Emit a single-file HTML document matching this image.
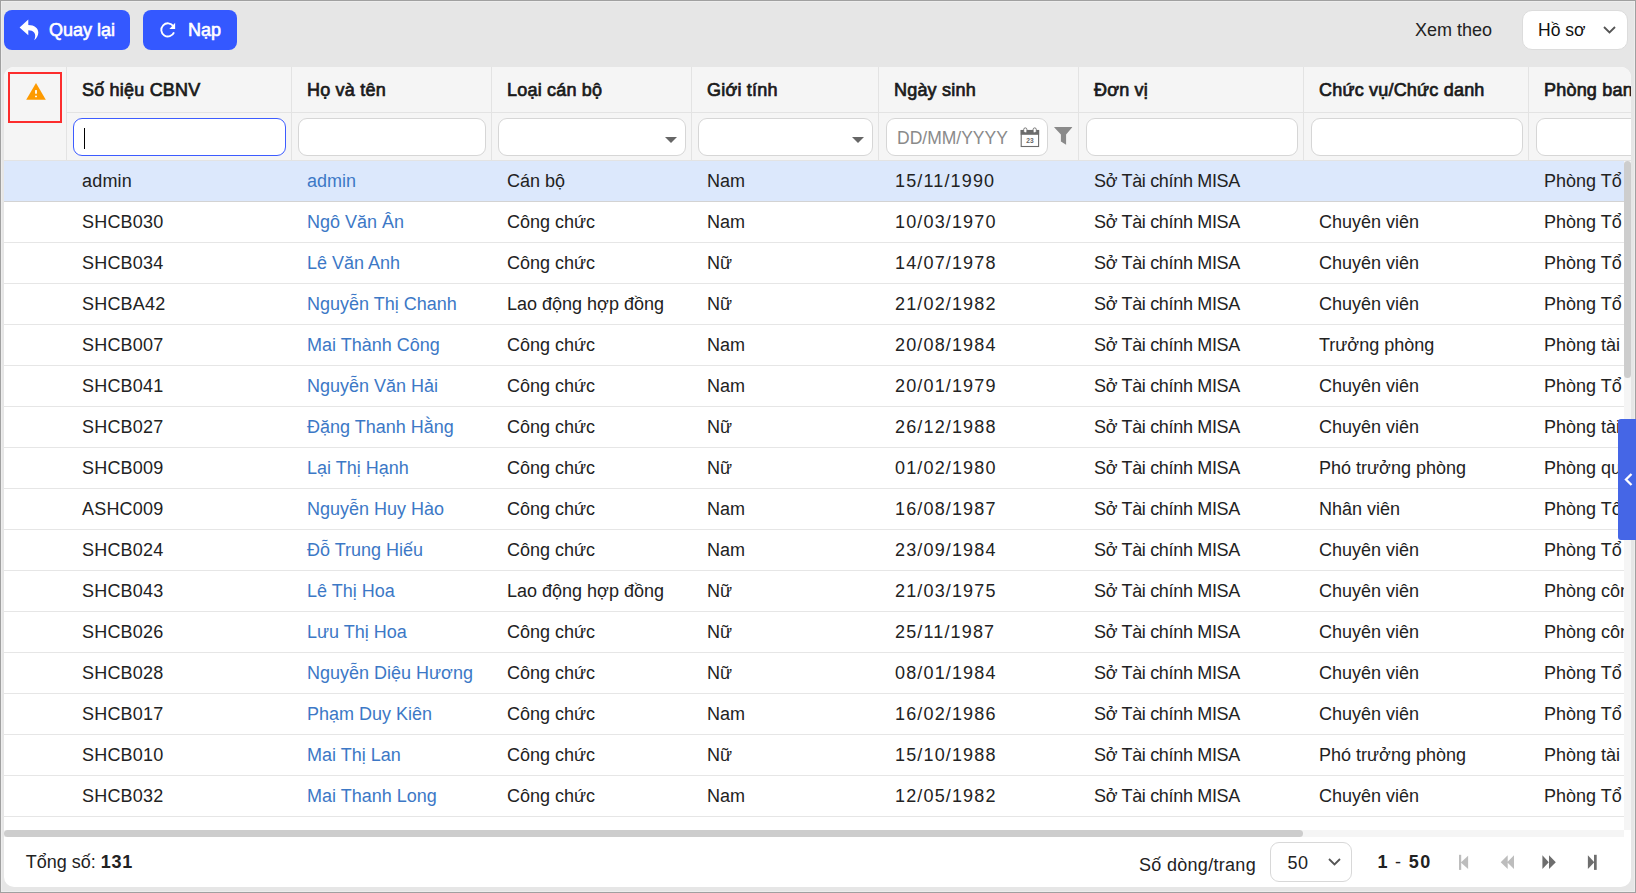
<!DOCTYPE html><html><head><meta charset="utf-8"><style>*{box-sizing:border-box;margin:0;padding:0}
html,body{width:1636px;height:893px;overflow:hidden;background:#e6e6e6;font-family:"Liberation Sans",sans-serif;color:#1f1f1f}
#frame{position:absolute;left:0;top:0;width:1636px;height:893px;background:#e6e6e6}
.fb{position:absolute;background:#a0a0a0}
.fl{position:absolute;border:1px solid #ededed}
.btn{position:absolute;top:10px;height:40px;border-radius:8px;background:#3458ff;color:#fff;font-size:18px}
.btn span{position:absolute;top:10px;line-height:20px;-webkit-text-stroke:0.6px #fff}
.btn .ic{position:absolute}
#xemtheo{position:absolute;left:1415px;top:20px;font-size:18px;line-height:20px;color:#222}
#sel{position:absolute;left:1522px;top:10px;width:105.5px;height:39.5px;border-radius:10px;background:#fff;border:1px solid #dcdcdc}
#sel span{position:absolute;left:15px;top:9px;font-size:17.5px;line-height:20px;color:#111}
#tbl{position:absolute;left:4px;top:67px;width:1627px;height:820px;background:#fff;border-radius:10px;overflow:hidden}
#hdr{position:absolute;left:0;top:0;width:100%;height:46px;background:#f5f5f5}
.hl{position:absolute;height:1px;background:#e3e3e3}
#flt{position:absolute;left:0;top:46px;width:100%;height:48px;background:#f5f5f5;border-bottom:1px solid #e3e3e3}
.vline{position:absolute;top:0;width:1px;height:94px;background:#e3e3e3}
.hcell{position:absolute;top:13px;font-size:18px;font-weight:400;line-height:20px;white-space:nowrap;color:#1a1a1a;-webkit-text-stroke:0.7px #1a1a1a;letter-spacing:0.2px}
#warn{position:absolute;left:4px;top:5px;width:54px;height:51px;border:2px solid #fc2d2d}
.inp{position:absolute;top:51px;height:38px;background:#fff;border:1px solid #d6d6d6;border-radius:9px}
.inp.focus{border:1.5px solid #3d5cff}
.caret{position:absolute;left:9.5px;top:8.5px;width:1px;height:21px;background:#000}
.tri{position:absolute;right:8px;top:18px;width:0;height:0;border-left:6.5px solid transparent;border-right:6.5px solid transparent;border-top:6.5px solid #666}
.ph{position:absolute;left:10px;top:9px;font-size:17.5px;line-height:20px;color:#8a8a8a}
#body{position:absolute;left:0;top:94px;width:1620px;height:668px;overflow:hidden}
.row{position:absolute;left:0;width:1800px;height:41px;border-bottom:1px solid #e6e6e6;background:#fff}
.row.sel{background:#dce8fc;border-bottom-color:#d3d3d3}
.cell{position:absolute;top:10px;font-size:18px;line-height:20px;white-space:nowrap;color:#222}
.cell.link{color:#3c78c6;letter-spacing:0px}
.cell.id{letter-spacing:0.2px}
.cell.date{letter-spacing:1.15px}
.cell.dv{letter-spacing:-0.33px}
#vtrack{position:absolute;left:1620px;top:94px;width:7px;height:669px;background:#f5f5f5}
#vthumb{position:absolute;left:0;top:0;width:7px;height:217px;border-radius:3.5px;background:#cdcdcd}
#htrack{position:absolute;left:0;top:763px;width:1620px;height:7px;background:#f5f5f5}
#hthumb{position:absolute;left:0;top:0;width:1299px;height:7px;border-radius:3.5px;background:#cdcdcd}
#total{position:absolute;left:21.8px;top:785px;font-size:18px;line-height:20px;color:#222}
#total b{letter-spacing:0.7px}
#rpp{position:absolute;left:1135px;top:788px;letter-spacing:0.3px;font-size:18px;line-height:20px;color:#222}
#sel50{position:absolute;left:1266px;top:775px;width:82px;height:40px;border-radius:9px;border:1px solid #d8d8d8;background:#fff}
#sel50 span{position:absolute;left:16.5px;top:9.5px;letter-spacing:0.6px;font-size:18px;line-height:20px;color:#222}
.rg{position:absolute;top:785px;font-size:18px;font-weight:700;line-height:20px;color:#222;letter-spacing:0.8px}
#tab{position:absolute;left:1618px;top:419px;width:18px;height:121px;background:#4566e6;border-radius:3px 0 0 3px}
</style></head><body>
<div id="frame"><div class="fl" style="left:1px;top:1px;width:1634px;height:891px"></div><div class="fb" style="left:0;top:0;width:1636px;height:1px"></div><div class="fb" style="left:0;top:0;width:1px;height:893px"></div><div class="fb" style="left:1635px;top:0;width:1px;height:893px"></div><div class="fb" style="left:0;top:892px;width:1636px;height:1px"></div>
<div class="btn" style="left:4px;width:126px"><svg class="ic" style="left:0;top:0" width="40" height="40" viewBox="0 0 40 40"><path d="M15.6 17.6 L24.3 9.6 L24.3 15 C30.6 15 34.3 18.3 34.3 22.6 C34.3 25.6 32.6 28.6 30.2 30.2 C31.6 27.2 31.6 24.6 30.1 22.6 C28.8 21 27 20.3 24.3 20.3 L24.3 25.3 Z" fill="#fff"/></svg><span style="left:45px">Quay lại</span></div>
<div class="btn" style="left:143px;width:94px"><svg class="ic" style="left:0;top:0" width="40" height="40" viewBox="0 0 40 40"><path d="M30.31 16.11 A6.6 6.6 0 1 0 31.02 22.37" fill="none" stroke="#fff" stroke-width="1.85"/><path d="M32.15 12.8 L32.15 18.9 L26.4 18.9 Z" fill="#fff"/></svg><span style="left:45px">Nạp</span></div>
<div id="xemtheo">Xem theo</div>
<div id="sel"><span>Hồ sơ</span><svg style="position:absolute;left:80px;top:15px" width="13" height="8" viewBox="0 0 13 8"><path d="M1 1 L6.5 6.5 L12 1" fill="none" stroke="#555" stroke-width="1.8"/></svg></div>
<div id="tbl">
<div id="hdr"></div><div id="flt"></div><div class="hl" style="left:62px;top:45px;width:1700px"></div>
<div class="vline" style="left:62px"></div>
<div class="hcell" style="left:78px">Số hiệu CBNV</div>
<div class="vline" style="left:287px"></div>
<div class="hcell" style="left:303px">Họ và tên</div>
<div class="vline" style="left:487px"></div>
<div class="hcell" style="left:503px">Loại cán bộ</div>
<div class="vline" style="left:687px"></div>
<div class="hcell" style="left:703px">Giới tính</div>
<div class="vline" style="left:874px"></div>
<div class="hcell" style="left:890px">Ngày sinh</div>
<div class="vline" style="left:1074px"></div>
<div class="hcell" style="left:1090px">Đơn vị</div>
<div class="vline" style="left:1299px"></div>
<div class="hcell" style="left:1315px">Chức vụ/Chức danh</div>
<div class="vline" style="left:1524px"></div>
<div class="hcell" style="left:1540px">Phòng ban</div>
<div id="warn"></div><svg width="20" height="18" viewBox="0 0 20 18" style="position:absolute;left:22px;top:16px"><path d="M10 0 L19.8 16.8 L0.2 16.8 Z" fill="#fd9a00"/><rect x="9.1" y="7.1" width="1.8" height="3.6" fill="#fff"/><rect x="9.1" y="12.7" width="1.8" height="1.5" fill="#fff"/></svg>
<div class="inp focus" style="left:69px;width:213px"><div class="caret"></div></div>
<div class="inp" style="left:294px;width:188px"></div>
<div class="inp" style="left:494px;width:188px"><div class="tri"></div></div>
<div class="inp" style="left:694px;width:175px"><div class="tri"></div></div>
<div class="inp" style="left:882px;width:162px"><span class="ph">DD/MM/YYYY</span></div>
<svg style="position:absolute;left:1006px;top:53px" width="70" height="35" viewBox="0 0 70 35"><rect x="11.2" y="10.5" width="17.4" height="16" fill="#fff" stroke="#6b6b6b" stroke-width="1.1"/><rect x="10.7" y="10" width="18.4" height="4.8" fill="#6b6b6b"/><rect x="13.7" y="7.9" width="3.2" height="4.9" rx="1.6" fill="#fff" stroke="#6b6b6b" stroke-width="0.9"/><rect x="23.1" y="7.9" width="3.2" height="4.9" rx="1.6" fill="#fff" stroke="#6b6b6b" stroke-width="0.9"/><text x="19.9" y="23" font-size="6.6" font-weight="700" font-family="Liberation Sans" fill="#666" text-anchor="middle">23</text></svg>
<svg style="position:absolute;left:1006px;top:53px" width="70" height="35" viewBox="0 0 70 35"><path d="M44.1 7.3 Q44 7 44.5 7 L61.9 7 Q62.4 7 62.3 7.3 L56.1 14.5 L56.1 24.8 L50.9 21.4 L50.9 14.5 Z" fill="#8a8a8a"/></svg>
<div class="inp" style="left:1082px;width:212px"></div>
<div class="inp" style="left:1307px;width:212px"></div>
<div class="inp" style="left:1532px;width:212px"></div>
<div id="body">
<div class="row sel" style="top:0px">
<div class="cell id" style="left:78px">admin</div>
<div class="cell link" style="left:303px">admin</div>
<div class="cell" style="left:503px">Cán bộ</div>
<div class="cell" style="left:703px">Nam</div>
<div class="cell date" style="left:891px">15/11/1990</div>
<div class="cell dv" style="left:1090px">Sở Tài chính MISA</div>
<div class="cell" style="left:1315px"></div>
<div class="cell" style="left:1540px">Phòng Tổ chức</div>
</div>
<div class="row" style="top:41px">
<div class="cell id" style="left:78px">SHCB030</div>
<div class="cell link" style="left:303px">Ngô Văn Ân</div>
<div class="cell" style="left:503px">Công chức</div>
<div class="cell" style="left:703px">Nam</div>
<div class="cell date" style="left:891px">10/03/1970</div>
<div class="cell dv" style="left:1090px">Sở Tài chính MISA</div>
<div class="cell" style="left:1315px">Chuyên viên</div>
<div class="cell" style="left:1540px">Phòng Tổ chức</div>
</div>
<div class="row" style="top:82px">
<div class="cell id" style="left:78px">SHCB034</div>
<div class="cell link" style="left:303px">Lê Văn Anh</div>
<div class="cell" style="left:503px">Công chức</div>
<div class="cell" style="left:703px">Nữ</div>
<div class="cell date" style="left:891px">14/07/1978</div>
<div class="cell dv" style="left:1090px">Sở Tài chính MISA</div>
<div class="cell" style="left:1315px">Chuyên viên</div>
<div class="cell" style="left:1540px">Phòng Tổ chức</div>
</div>
<div class="row" style="top:123px">
<div class="cell id" style="left:78px">SHCBA42</div>
<div class="cell link" style="left:303px">Nguyễn Thị Chanh</div>
<div class="cell" style="left:503px">Lao động hợp đồng</div>
<div class="cell" style="left:703px">Nữ</div>
<div class="cell date" style="left:891px">21/02/1982</div>
<div class="cell dv" style="left:1090px">Sở Tài chính MISA</div>
<div class="cell" style="left:1315px">Chuyên viên</div>
<div class="cell" style="left:1540px">Phòng Tổ chức</div>
</div>
<div class="row" style="top:164px">
<div class="cell id" style="left:78px">SHCB007</div>
<div class="cell link" style="left:303px">Mai Thành Công</div>
<div class="cell" style="left:503px">Công chức</div>
<div class="cell" style="left:703px">Nam</div>
<div class="cell date" style="left:891px">20/08/1984</div>
<div class="cell dv" style="left:1090px">Sở Tài chính MISA</div>
<div class="cell" style="left:1315px">Trưởng phòng</div>
<div class="cell" style="left:1540px">Phòng tài chính</div>
</div>
<div class="row" style="top:205px">
<div class="cell id" style="left:78px">SHCB041</div>
<div class="cell link" style="left:303px">Nguyễn Văn Hải</div>
<div class="cell" style="left:503px">Công chức</div>
<div class="cell" style="left:703px">Nam</div>
<div class="cell date" style="left:891px">20/01/1979</div>
<div class="cell dv" style="left:1090px">Sở Tài chính MISA</div>
<div class="cell" style="left:1315px">Chuyên viên</div>
<div class="cell" style="left:1540px">Phòng Tổ chức</div>
</div>
<div class="row" style="top:246px">
<div class="cell id" style="left:78px">SHCB027</div>
<div class="cell link" style="left:303px">Đặng Thanh Hằng</div>
<div class="cell" style="left:503px">Công chức</div>
<div class="cell" style="left:703px">Nữ</div>
<div class="cell date" style="left:891px">26/12/1988</div>
<div class="cell dv" style="left:1090px">Sở Tài chính MISA</div>
<div class="cell" style="left:1315px">Chuyên viên</div>
<div class="cell" style="left:1540px">Phòng tài chính</div>
</div>
<div class="row" style="top:287px">
<div class="cell id" style="left:78px">SHCB009</div>
<div class="cell link" style="left:303px">Lại Thị Hạnh</div>
<div class="cell" style="left:503px">Công chức</div>
<div class="cell" style="left:703px">Nữ</div>
<div class="cell date" style="left:891px">01/02/1980</div>
<div class="cell dv" style="left:1090px">Sở Tài chính MISA</div>
<div class="cell" style="left:1315px">Phó trưởng phòng</div>
<div class="cell" style="left:1540px">Phòng quản lý</div>
</div>
<div class="row" style="top:328px">
<div class="cell id" style="left:78px">ASHC009</div>
<div class="cell link" style="left:303px">Nguyễn Huy Hào</div>
<div class="cell" style="left:503px">Công chức</div>
<div class="cell" style="left:703px">Nam</div>
<div class="cell date" style="left:891px">16/08/1987</div>
<div class="cell dv" style="left:1090px">Sở Tài chính MISA</div>
<div class="cell" style="left:1315px">Nhân viên</div>
<div class="cell" style="left:1540px">Phòng Tổ chức</div>
</div>
<div class="row" style="top:369px">
<div class="cell id" style="left:78px">SHCB024</div>
<div class="cell link" style="left:303px">Đỗ Trung Hiếu</div>
<div class="cell" style="left:503px">Công chức</div>
<div class="cell" style="left:703px">Nam</div>
<div class="cell date" style="left:891px">23/09/1984</div>
<div class="cell dv" style="left:1090px">Sở Tài chính MISA</div>
<div class="cell" style="left:1315px">Chuyên viên</div>
<div class="cell" style="left:1540px">Phòng Tổ chức</div>
</div>
<div class="row" style="top:410px">
<div class="cell id" style="left:78px">SHCB043</div>
<div class="cell link" style="left:303px">Lê Thị Hoa</div>
<div class="cell" style="left:503px">Lao động hợp đồng</div>
<div class="cell" style="left:703px">Nữ</div>
<div class="cell date" style="left:891px">21/03/1975</div>
<div class="cell dv" style="left:1090px">Sở Tài chính MISA</div>
<div class="cell" style="left:1315px">Chuyên viên</div>
<div class="cell" style="left:1540px">Phòng công nghệ</div>
</div>
<div class="row" style="top:451px">
<div class="cell id" style="left:78px">SHCB026</div>
<div class="cell link" style="left:303px">Lưu Thị Hoa</div>
<div class="cell" style="left:503px">Công chức</div>
<div class="cell" style="left:703px">Nữ</div>
<div class="cell date" style="left:891px">25/11/1987</div>
<div class="cell dv" style="left:1090px">Sở Tài chính MISA</div>
<div class="cell" style="left:1315px">Chuyên viên</div>
<div class="cell" style="left:1540px">Phòng công nghệ</div>
</div>
<div class="row" style="top:492px">
<div class="cell id" style="left:78px">SHCB028</div>
<div class="cell link" style="left:303px">Nguyễn Diệu Hương</div>
<div class="cell" style="left:503px">Công chức</div>
<div class="cell" style="left:703px">Nữ</div>
<div class="cell date" style="left:891px">08/01/1984</div>
<div class="cell dv" style="left:1090px">Sở Tài chính MISA</div>
<div class="cell" style="left:1315px">Chuyên viên</div>
<div class="cell" style="left:1540px">Phòng Tổ chức</div>
</div>
<div class="row" style="top:533px">
<div class="cell id" style="left:78px">SHCB017</div>
<div class="cell link" style="left:303px">Phạm Duy Kiên</div>
<div class="cell" style="left:503px">Công chức</div>
<div class="cell" style="left:703px">Nam</div>
<div class="cell date" style="left:891px">16/02/1986</div>
<div class="cell dv" style="left:1090px">Sở Tài chính MISA</div>
<div class="cell" style="left:1315px">Chuyên viên</div>
<div class="cell" style="left:1540px">Phòng Tổ chức</div>
</div>
<div class="row" style="top:574px">
<div class="cell id" style="left:78px">SHCB010</div>
<div class="cell link" style="left:303px">Mai Thị Lan</div>
<div class="cell" style="left:503px">Công chức</div>
<div class="cell" style="left:703px">Nữ</div>
<div class="cell date" style="left:891px">15/10/1988</div>
<div class="cell dv" style="left:1090px">Sở Tài chính MISA</div>
<div class="cell" style="left:1315px">Phó trưởng phòng</div>
<div class="cell" style="left:1540px">Phòng tài chính</div>
</div>
<div class="row" style="top:615px">
<div class="cell id" style="left:78px">SHCB032</div>
<div class="cell link" style="left:303px">Mai Thanh Long</div>
<div class="cell" style="left:503px">Công chức</div>
<div class="cell" style="left:703px">Nam</div>
<div class="cell date" style="left:891px">12/05/1982</div>
<div class="cell dv" style="left:1090px">Sở Tài chính MISA</div>
<div class="cell" style="left:1315px">Chuyên viên</div>
<div class="cell" style="left:1540px">Phòng Tổ chức</div>
</div>
</div>
<div id="vtrack"><div id="vthumb"></div></div>
<div id="htrack"><div id="hthumb"></div></div>
<div id="total">Tổng số: <b>131</b></div>
<div id="rpp">Số dòng/trang</div>
<div id="sel50"><span>50</span><svg style="position:absolute;left:56.5px;top:14.5px" width="13" height="8" viewBox="0 0 13 8"><path d="M1 1 L6.5 6.5 L12 1" fill="none" stroke="#555" stroke-width="1.8"/></svg></div>
<div class="rg" style="left:1373.5px">1</div><div class="rg" style="left:1391px;font-weight:400">-</div><div class="rg" style="left:1404.8px;letter-spacing:1.4px">50</div>
<svg style="position:absolute;left:1446px;top:778px" width="160" height="35" viewBox="0 0 160 35"><rect x="9" y="9.8" width="2.2" height="15.1" fill="#bdbdbd"/><path d="M10.8 17.4 L18.1 10.8 L18.1 24 Z" fill="#bdbdbd"/><path d="M50.7 17.2 L57.7 10.3 L57.7 24 Z M57.2 17.2 L64 10.3 L64 24 Z" fill="#bdbdbd"/><path d="M92.4 10.3 L98.8 17.2 L92.4 24 Z M99 10.3 L105.8 17.2 L99 24 Z" fill="#6e6e6e"/><path d="M137.9 10.3 L144.3 17.2 L137.9 24 Z" fill="#6e6e6e"/><rect x="144" y="9.8" width="2.7" height="15.1" fill="#6e6e6e"/></svg>
</div>
<div id="tab"><svg style="position:absolute;left:6px;top:54px" width="9" height="13" viewBox="0 0 9 13"><path d="M7.5 1 L2 6.5 L7.5 12" fill="none" stroke="#fff" stroke-width="2.3"/></svg></div>
</div></body></html>
